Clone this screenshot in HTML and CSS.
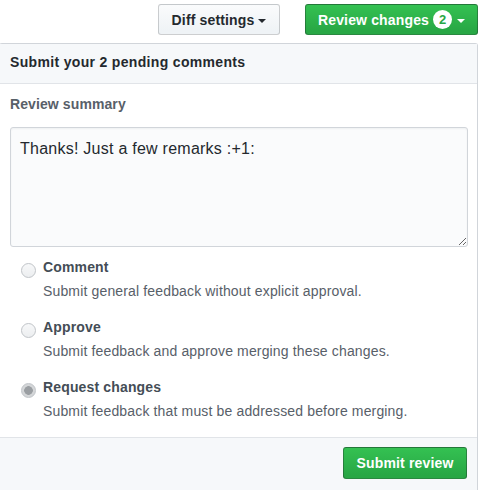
FILE: index.html
```html
<!DOCTYPE html>
<html>
<head>
<meta charset="utf-8">
<link rel="stylesheet" href="styles.css">
</head>
<body>
<div class="toolbar">
  <button class="btn btn-default">Diff settings <span class="caret"></span></button>
  <button class="btn btn-primary">Review changes <span class="badge">2</span><span class="caret caret-light"></span></button>
</div>
<div class="panel">
  <div class="panel-header">Submit your 2 pending comments</div>
  <div class="panel-body">
    <div class="summary-label">Review summary</div>
    <textarea class="summary">Thanks! Just a few remarks :+1:</textarea>
    <div class="options">
      <div class="option">
        <span class="radio"></span>
        <div class="option-text">
          <div class="option-title">Comment</div>
          <div class="option-desc">Submit general feedback without explicit approval.</div>
        </div>
      </div>
      <div class="option">
        <span class="radio"></span>
        <div class="option-text">
          <div class="option-title">Approve</div>
          <div class="option-desc">Submit feedback and approve merging these changes.</div>
        </div>
      </div>
      <div class="option">
        <span class="radio radio-checked"></span>
        <div class="option-text">
          <div class="option-title">Request changes</div>
          <div class="option-desc">Submit feedback that must be addressed before merging.</div>
        </div>
      </div>
    </div>
  </div>
  <div class="panel-footer">
    <button class="btn btn-primary btn-submit">Submit review</button>
  </div>
</div>
</body>
</html>
```
FILE: styles.css
```css
* { box-sizing: border-box; }
html, body { margin: 0; padding: 0; background: #fff; }
body {
  font-family: "Liberation Sans", Arial, sans-serif;
  font-size: 14px;
  color: #24292e;
  overflow: hidden;
  height: 490px;
}
.toolbar {
  display: flex;
  justify-content: flex-end;
  gap: 25px;
  padding: 4px 5px 0 0;
}
.btn {
  font-family: "Liberation Sans", Arial, sans-serif;
  font-size: 14px;
  font-weight: bold;
  height: 31px;
  line-height: 20px;
  padding: 0 12px;
  border-radius: 3px;
  border: 1px solid rgba(27,31,35,0.2);
  display: inline-flex;
  align-items: center;
  cursor: pointer;
  letter-spacing: 0.15px;
}
.btn-default {
  width: 122px;
  justify-content: center;
  color: #24292e;
  background: linear-gradient(-180deg, #fafbfc 0%, #eff3f6 90%);
}
.btn-primary {
  color: #fff;
  background: linear-gradient(-180deg, #34c152 0%, #28a745 90%);
  border-color: rgba(27,31,35,0.35);
}
.toolbar .btn-primary { width: 173px; justify-content: center; padding: 0 10px; }
.caret {
  display: inline-block;
  width: 0; height: 0;
  margin-left: 4px;
  margin-top: 2px;
  border-top: 4px solid #24292e;
  border-left: 4px solid transparent;
  border-right: 4px solid transparent;
}
.caret-light { border-top-color: #fff; margin-left: 5px; }
.badge {
  display: inline-flex;
  align-items: center;
  justify-content: center;
  width: 19px; height: 19px;
  border-radius: 50%;
  background: #fff;
  color: #28a745;
  font-size: 13px;
  font-weight: bold;
  margin-left: 4px;
  letter-spacing: 0;
}
.panel {
  margin: 8px 5px 0 -1px;
  border: 1px solid #d1d5da;
  border-bottom: none;
  border-radius: 3px 3px 0 0;
  background: #fff;
}
.panel-header {
  height: 40px;
  display: flex;
  align-items: center;
  padding: 0 10px 3px;
  background: #f6f8fa;
  border-bottom: 1px solid #e1e4e8;
  font-weight: bold;
  font-size: 14px;
  color: #24292e;
  letter-spacing: 0.33px;
}
.panel-body {
  padding: 10px 9px 16px 10px;
}
.summary-label {
  font-weight: bold;
  color: #586069;
  line-height: 20px;
  margin-bottom: 13px;
  letter-spacing: 0.1px;
}
.summary {
  display: block;
  width: 458px;
  height: 120px;
  padding: 11px 9px;
  border: 1px solid #d1d5da;
  border-radius: 3px;
  background: #fafbfc;
  font-family: "Liberation Sans", Arial, sans-serif;
  font-size: 16px;
  line-height: 20px;
  color: #24292e;
  letter-spacing: 0.25px;
  resize: vertical;
  outline: none;
  box-shadow: inset 0 1px 2px rgba(27,31,35,0.05);
}
.options {
  display: flex;
  flex-direction: column;
  gap: 16px;
  margin-top: 10px;
}
.option {
  display: flex;
  align-items: flex-start;
}
.radio {
  flex: none;
  width: 15px; height: 15px;
  border-radius: 50%;
  border: 1px solid #c0c4c8;
  background: linear-gradient(#f7f8f9, #eceef0);
  margin: 6px 0 0 11px;
}
.radio-checked {
  background: radial-gradient(circle, #9a9ea2 0 4px, #d4d6d8 4.6px 100%);
}
.option-text { margin-left: 7px; }
.option-title {
  font-weight: bold;
  color: #444d56;
  line-height: 20px;
  letter-spacing: 0.15px;
}
.option-desc {
  color: #586069;
  line-height: 20px;
  margin-top: 4px;
  letter-spacing: 0.15px;
}
.panel-footer {
  display: flex;
  justify-content: flex-end;
  padding: 9px 10px 10px;
  background: #f6f8fa;
  border-top: 1px solid #e1e4e8;
  height: 60px;
}
.btn-submit {
  height: 32px;
  width: 124px;
  justify-content: center;
}
```
